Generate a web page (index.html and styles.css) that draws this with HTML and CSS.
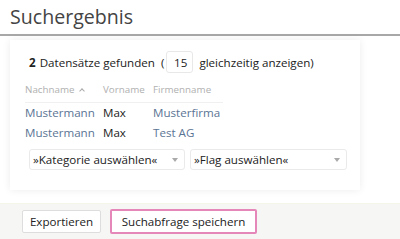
FILE: index.html
```html
<!DOCTYPE html>
<html lang="de">
<head>
<meta charset="utf-8">
<link rel="stylesheet" href="styles.css">
</head>
<body>
<header class="head"><h1 class="title">Suchergebnis</h1></header>
<main class="main">
  <section class="card">
    <div class="count">
      <b>2</b> Datensätze gefunden
      <span class="paren">(</span>
      <span class="num">15</span>
      <span>gleichzeitig anzeigen)</span>
    </div>
    <table class="tbl">
      <thead>
        <tr><th class="c1">Nachname <span class="caret"></span></th><th class="c2">Vorname</th><th class="c3">Firmenname</th></tr>
      </thead>
      <tbody>
        <tr><td class="link">Mustermann</td><td>Max</td><td class="link">Musterfirma</td></tr>
        <tr><td class="link">Mustermann</td><td>Max</td><td class="link">Test AG</td></tr>
      </tbody>
    </table>
    <div class="selects">
      <div class="sel sel1">»Kategorie auswählen«<span class="arrow"></span></div>
      <div class="sel sel2">»Flag auswählen«<span class="arrow"></span></div>
    </div>
  </section>
</main>
<footer class="foot">
  <button class="btn btn-exp">Exportieren</button>
  <button class="btn btn-hl">Suchabfrage speichern</button>
</footer>
</body>
</html>
```
FILE: styles.css
```css
html, body { margin: 0; padding: 0; }
body {
  width: 400px; height: 239px; overflow: hidden;
  font-family: "Open Sans", sans-serif;
  color: #222; background: #fff;
  display: flex; flex-direction: column;
}
.head {
  border-bottom: 2px solid #a8a8a8;
  padding: 0 10px; box-sizing: border-box; height: 36px;
  display: flex; align-items: center;
}
.title { margin: 0 0 2px 0; font-weight: normal; font-size: 19.6px; color: #444; }
.main { padding: 4px 0 0 10px; height: 167px; box-sizing: border-box; }
.card {
  width: 350px; height: 150px; box-sizing: border-box;
  background: #fff; box-shadow: 0 0 8px rgba(0,0,0,0.08);
  padding: 11px 13px 0 19px;
}
.count { display: flex; align-items: center; font-size: 11.6px; height: 22px; }
.count b { margin-right: 4px; font-weight: 700; }
.paren { margin: 0 2px 0 6px; }
.num {
  width: 27px; height: 22px; box-sizing: border-box; border: 1px solid #e8e8e8; border-radius: 3px;
  display: flex; align-items: center; justify-content: flex-end; padding-right: 5px; margin-right: 6px;
}
.tbl { border-collapse: collapse; table-layout: fixed; width: 198px; margin: 6px 0 0 -4px; font-size: 11.6px; }
.tbl th { font-weight: normal; color: #b0b0b0; font-size: 9.8px; text-align: left; padding: 4px 0 6px 0; border-bottom: 1px solid #f0f0f0; line-height: 13px; }
.tbl td { padding: 3px 0; line-height: 14px; white-space: nowrap; }
.c1 { width: 78px; }
.c2 { width: 50px; }
.c3 { width: 70px; }
.link { color: #5a7494; }
.caret {
  display: inline-block; width: 3px; height: 3px; margin-left: 3px; vertical-align: 0px;
  border-left: 1px solid #aaa; border-top: 1px solid #aaa; transform: rotate(45deg);
}
.selects { display: flex; gap: 5px; margin-top: 6px; }
.sel {
  height: 21px; box-sizing: border-box; border: 1px solid #eaeaea; border-radius: 3px;
  font-size: 11.6px; display: flex; align-items: center; padding-left: 3px; position: relative;
}
.sel1 { width: 156px; }
.sel2 { width: 157px; }
.arrow {
  position: absolute; right: 6px; top: 8px; width: 0; height: 0;
  border-left: 3.5px solid transparent; border-right: 3.5px solid transparent; border-top: 4px solid #aaa;
}
.foot {
  flex: 1; background: #f6f6f4; border-top: 1px solid #f6f5ea;
  display: flex; align-items: center; gap: 9px; padding-left: 22px;
}
.btn {
  font-family: inherit; font-size: 11.6px; color: #222; background: #fff;
  border: 1px solid #ddd; border-radius: 2px; height: 23px; padding: 0; text-align: center;
}
.btn-exp { width: 79px; }
.btn-hl { border: 2px solid #e587b9; height: 25px; width: 147px; }
```
